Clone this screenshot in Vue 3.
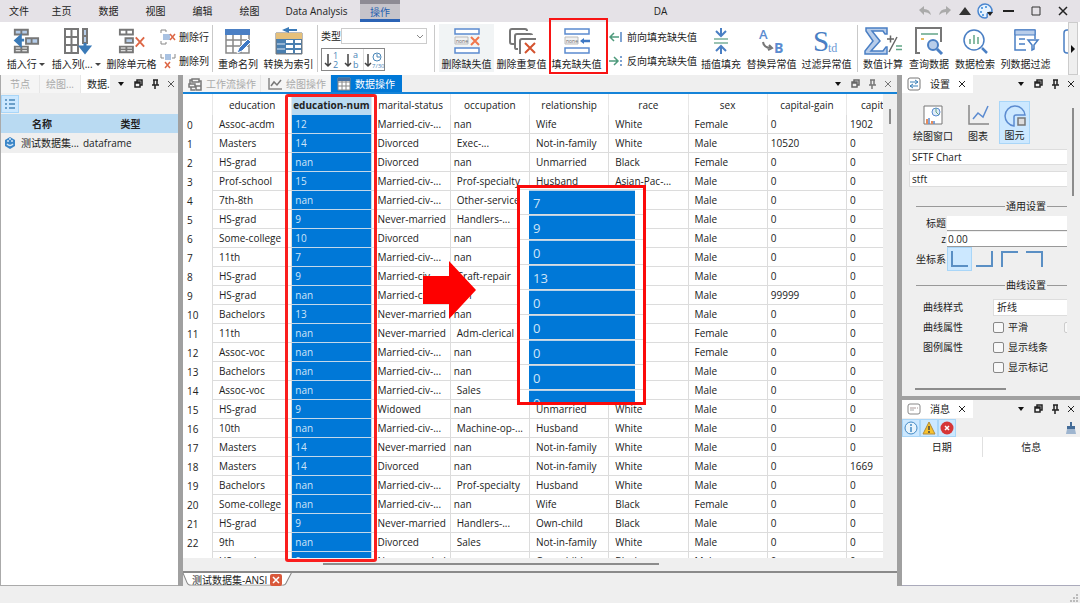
<script setup>
import { ref } from 'vue'

const menus = ['文件', '主页', '数据', '视图', '编辑', '绘图', 'Data Analysis', '操作']

const icons = {
  insertRow: '<g fill="#fff" stroke="#777" stroke-width="2"><path fill="#b5cdea" d="M2 2h14v5H2zM9 2v5M14 11h13v6H14zM20 11v6"/><path d="M2 26v-6h14v6zM2 23h14M9 20v6"/></g><path d="M12 13H5M8 9l-5 4.500 5 4.500z" stroke="#3a7ab8" stroke-width="3" fill="#3a7ab8"/>',
  insertCol: '<path fill="#fff" stroke="#777" stroke-width="2" d="M2 2h13v24H2zM8.500 2v24M2 10h13M2 18h13"/><path fill="#b5cdea" stroke="#777" stroke-width="2" d="M20 2h4v14h-4zM20 9h4"/><path d="M22 16v6M18 20l4 5 4-5z" stroke="#3a7ab8" stroke-width="3" fill="#3a7ab8"/>',
  deleteCell: '<g fill="#fff" stroke="#777" stroke-width="2"><path d="M2 2h14v5H2zM9 2v5M2 20h14v6H2zM9 20v6M2 23h14"/><path fill="#b5cdea" d="M8 11h8v5H8z"/></g><path d="M19 10l9 10M28 10l-9 10" stroke="#dd6645" stroke-width="2"/>',
  deleteRow: '<path d="M1 4V1h5v2M1 12v3h5v-2" fill="none" stroke="#888"/><path d="M3 5h7v6H3z" fill="#a9c2e2"/><path d="M10 5l5 6M15 5l-5 6" stroke="#dd6645" stroke-width="1.500"/>',
  deleteCol: '<path d="M1 1v4h3M15 1v4h-3" fill="none" stroke="#888"/><path d="M5 1h6v6H5z" fill="#a9c2e2"/><path d="M5 9l5 6M10 9l-5 6" stroke="#dd6645" stroke-width="1.500"/>',
  rename: '<path fill="#fff" stroke="#888" stroke-width="1.500" d="M2 3h23v23H2zM9 6v20M17 6v20M2 13h23M2 19h23"/><path fill="#4a7fc4" d="M1 2h25v6H1z"/><path d="M13 26l2-5 9-9 3 3-9 9z" fill="#3e78c4" stroke="#fff"/>',
  toIndex: '<path d="M9 3h13" stroke="#3a7ab8" stroke-width="2"/><path d="M14 0L7 3l7 3z" fill="#3a7ab8"/><path fill="#4a7fb0" stroke="#777" d="M1 6h26v21H1z"/><path fill="#e5c07b" d="M1 6h26v6H1z"/><path fill="#fff" d="M11 13h7v3h-7zM20 13h6v3h-6zM11 18h7v3h-7zM20 18h6v3h-6zM11 23h7v3h-7zM20 23h6v3h-6z"/><path d="M2 17h8M2 22h8" stroke="#dde8f4"/>',
  dropNone: '<path fill="#fff" stroke="#5b8bd0" stroke-width="1.500" d="M2 2h24v5H2zM2 21h24v5H2z"/><path fill="#f1f1f1" stroke="#bbb" d="M2 10h13v7H2z"/><text x="3" y="16" font-size="5" fill="#666" font-family="Open Sans">none</text><path d="M18 10l8 8M26 10l-8 8" stroke="#f0764c" stroke-width="2"/>',
  dropDup: '<path fill="none" stroke="#777" stroke-width="2" d="M6 17H4q-2 0-2-2V4q0-2 2-2h13q2 0 2 2M10 22H8q-1 0-1-2V9q0-2 2-2h13q2 0 2 1M12 27V14q0-2 2-2h14"/><path d="M17 16l10 10M27 16L17 26" stroke="#d4532f" stroke-width="2"/>',
  fillNone: '<path fill="#fff" stroke="#5b8bd0" stroke-width="1.500" d="M2 2h24v5H2zM2 21h24v5H2z"/><path fill="#f1f1f1" stroke="#bbb" d="M2 10h13v7H2z"/><text x="3" y="16" font-size="5" fill="#666" font-family="Open Sans">none</text><path d="M20 14h7" stroke="#3e78c4" stroke-width="2.500"/><path d="M21 11l-4 3 4 3z" fill="#3e78c4"/>',
  ffill: '<path d="M2 8h9M6 4L2 8l4 4" fill="none" stroke="#4e9a7c" stroke-width="1.500"/><path d="M13 3v10" stroke="#5484c4" stroke-width="1.500"/>',
  bfill: '<path d="M1 8h9M6 4l4 4-4 4" fill="none" stroke="#4e9a7c" stroke-width="1.500"/><path d="M13 3v10" stroke="#5484c4" stroke-width="1.500" stroke-dasharray="2 2"/>',
  interp: '<path d="M7 12h14M7 16h14" stroke="#7ab09b" stroke-width="1.500"/><path d="M14 1v8M9 4l5 5 5-5M14 27v-8M9 24l5-5 5 5" fill="none" stroke="#4a7fc4" stroke-width="2"/>',
  replace: '<text x="1" y="12" font-size="13" font-weight="600" fill="#5b8bd0" font-family="Open Sans">A</text><text x="16" y="26" font-size="14" font-weight="700" fill="#5b8bd0" font-family="Open Sans">B</text><path d="M5 15q1 6 8 6M11 18l3 3-4 2" fill="none" stroke="#777" stroke-width="2"/>',
  std: '<text x="0" y="24" font-size="29" fill="#4a7fc4" font-family="Liberation Serif">S</text><text x="15" y="25" font-size="12" fill="#6b98d4" font-family="Liberation Serif">td</text>',
  calc: '<path d="M-3 1h21v6h-2l-2-3H3l8 10-9 10h12l3-4h1v7H-4v-3l8-10-7-10z" fill="#b8cdea" stroke="#4a7fc4" stroke-width="1.500"/><path d="M18 12h7M21.500 8.500v7M20 25l8-15" stroke="#666" stroke-width="1.500"/><path d="M27 19h6M27 22.500h6" stroke="#62a587" stroke-width="1.500"/>',
  query: '<path d="M5 26H1V1h25v14" fill="none" stroke="#777" stroke-width="2"/><path d="M6 7h17" stroke="#62a587" stroke-width="1.500"/><path d="M6 12h3" stroke="#e4b95b" stroke-width="2"/><circle cx="18" cy="18" r="5" fill="#b8cdea" stroke="#4a7fc4" stroke-width="2"/><path d="M22 22l5 5" stroke="#4a7fc4" stroke-width="3"/>',
  search: '<circle cx="13" cy="13" r="10" fill="none" stroke="#4a7fc4" stroke-width="1.500"/><path d="M21 21l5 5" stroke="#4a7fc4" stroke-width="2.500"/><path d="M9 12v5M13 8v9M17 10v7" stroke="#62a587" stroke-width="1.500"/>',
  filter: '<path d="M14 23H3V3h20v9" fill="none" stroke="#4a7fc4" stroke-width="1.500"/><path d="M3 3h20v5H3z" fill="#b8cdea" stroke="#4a7fc4"/><path d="M7 12h6M7 17h6" stroke="#4a7fc4" stroke-width="1.500"/><path d="M16 13h10l-4 5v4l-2 1v-5z" fill="#fff" stroke="#4a7fc4" stroke-width="1.500"/>'
}

const missing = [
  { t: '删除缺失值', i: 'dropNone', c: 'hover' },
  { t: '删除重复值', i: 'dropDup' },
  { t: '填充缺失值', i: 'fillNone', c: 'marked' }
]
const outliers = [
  { t: '插值填充', i: 'interp', c: 'four' },
  { t: '替换异常值', i: 'replace' },
  { t: '过滤异常值', i: 'std' }
]
const tools = [
  { t: '数值计算', i: 'calc', c: 'four' },
  { t: '查询数据', i: 'query', c: 'four' },
  { t: '数据检索', i: 'search', c: 'four' },
  { t: '列数据过滤', i: 'filter' }
]

const columns = ['education', 'education-num', 'marital-status', 'occupation', 'relationship', 'race', 'sex', 'capital-gain']
const M = 'Married-civ-...'
const N = 'Never-married'
const D = 'Divorced'
const rows = [
  ['Assoc-acdm', '12', M, 'nan', 'Wife', 'White', 'Female', '0', '1902'],
  ['Masters', '14', D, 'Exec-...', 'Not-in-family', 'White', 'Male', '10520', '0'],
  ['HS-grad', 'nan', D, 'nan', 'Unmarried', 'Black', 'Female', '0', '0'],
  ['Prof-school', '15', M, 'Prof-specialty', 'Husband', 'Asian-Pac-...', 'Male', '0', '0'],
  ['7th-8th', 'nan', M, 'Other-service', '', '', 'Male', '0', '0'],
  ['HS-grad', '9', N, 'Handlers-...', '', '', 'Male', '0', '0'],
  ['Some-college', '10', D, 'nan', '', '', 'Male', '0', '0'],
  ['11th', '7', M, 'nan', '', '', 'Male', '0', '0'],
  ['HS-grad', '9', M, 'Craft-repair', '', '', 'Male', '0', '0'],
  ['HS-grad', 'nan', M, 'nan', '', '', 'Male', '99999', '0'],
  ['Bachelors', '13', N, 'nan', '', '', 'Male', '0', '0'],
  ['11th', 'nan', N, 'Adm-clerical', '', '', 'Female', '0', '0'],
  ['Assoc-voc', 'nan', M, 'nan', '', '', 'Female', '0', '0'],
  ['Bachelors', 'nan', M, 'nan', '', '', 'Male', '0', '0'],
  ['Assoc-voc', 'nan', M, 'Sales', '', '', 'Male', '0', '0'],
  ['HS-grad', '9', 'Widowed', 'nan', 'Unmarried', 'White', 'Male', '0', '0'],
  ['10th', 'nan', M, 'Machine-op-...', 'Husband', 'White', 'Male', '0', '0'],
  ['Masters', '14', N, 'nan', 'Not-in-family', 'White', 'Male', '0', '0'],
  ['Masters', '14', D, 'nan', 'Not-in-family', 'White', 'Male', '0', '1669'],
  ['Bachelors', 'nan', M, 'Prof-specialty', 'Husband', 'White', 'Male', '0', '0'],
  ['Some-college', 'nan', M, 'nan', 'Wife', 'Black', 'Female', '0', '0'],
  ['HS-grad', '9', N, 'Handlers-...', 'Own-child', 'Black', 'Male', '0', '0'],
  ['9th', 'nan', D, 'Sales', 'Not-in-family', 'White', 'Male', '0', '0'],
  ['HS-grad', '9', N, 'nan', 'Own-child', 'Black', 'Male', '0', '0']
]
const filled = ['7', '9', '0', '13', '0', '0', '0', '0', '0']

const isLead = (v, c) => c !== 1 && c < 7 && v !== 'nan'

const chartTitle = ref('')
const zValue = ref('0.00')
const axes = ['M2 1v15h16', 'M17 1v15H1', 'M2 17V2h16', 'M17 17V2H1']
</script>

<template>
  <div class="app">
    <header class="titlebar">
      <nav class="menus">
        <button v-for="m in menus" :key="m" class="menu" :class="{ active: m === '操作', file: m === '文件', wide: m.length > 4 }">{{ m }}</button>
      </nav>
      <span class="caption">DA</span>
      <div class="window-tools">
        <button aria-label="撤销"><svg width="14" height="12" viewBox="0 0 14 12"><path d="M1 5l5-4v3q6 0 7 6-3-3-7-3v3z" fill="#aaa" /></svg></button>
        <button aria-label="重做"><svg width="14" height="12" viewBox="0 0 14 12"><path d="M13 5L8 1v3q-6 0-7 6 3-3 7-3v3z" fill="#aaa" /></svg></button>
        <button aria-label="折叠功能区"><svg width="12" height="10" viewBox="0 0 12 10"><path d="M0 9l6-8 6 8z" fill="#333" /></svg></button>
        <button aria-label="主题"><svg width="18" height="18" viewBox="0 0 18 18"><path d="M9 2a7 7 0 1 0 0 14q3 0 2-3 0-3 5-3a7 7 0 0 0-7-8z" fill="#e7f2fd" stroke="#4a86cf" stroke-width="1.500" /><g fill="#3688d8"><circle cx="6" cy="6" r="1" /><circle cx="10" cy="5" r="1" /><circle cx="5" cy="10" r="1" /><circle cx="7" cy="13" r="1" /></g><path d="M11 10h6l-3 4z" fill="#222" /></svg></button>
        <button class="win" aria-label="最小化"><svg width="12" height="12" viewBox="0 0 12 12"><path d="M0 6h11" stroke="#222" stroke-width="2" /></svg></button>
        <button class="win" aria-label="最大化"><svg width="12" height="12" viewBox="0 0 12 12"><path d="M2 2h8v8H2z" fill="none" stroke="#333" /></svg></button>
        <button class="win" aria-label="关闭"><svg width="12" height="12" viewBox="0 0 12 12"><path d="M2 2l8 8M10 2l-8 8" stroke="#222" stroke-width="1.500" /></svg></button>
      </div>
    </header>

    <section class="ribbon">
      <div class="group first">
        <button class="tool four"><svg class="big" viewBox="-1 0 30 28" v-html="icons.insertRow" /><span>插入行 <i class="drop" /></span></button>
        <button class="tool"><svg class="big" viewBox="0 0 28 28" v-html="icons.insertCol" /><span>插入列(... <i class="drop" /></span></button>
        <button class="tool"><svg class="big" viewBox="0 0 30 28" v-html="icons.deleteCell" /><span>删除单元格</span></button>
        <div class="stack">
          <button class="small"><svg width="16" height="16" v-html="icons.deleteRow" />删除行</button>
          <button class="small"><svg width="16" height="16" v-html="icons.deleteCol" />删除列</button>
        </div>
      </div>
      <div class="group">
        <button class="tool four"><svg class="big" viewBox="0 0 28 28" v-html="icons.rename" /><span>重命名列</span></button>
        <button class="tool"><svg class="big" viewBox="0 0 28 28" v-html="icons.toIndex" /><span>转换为索引</span></button>
      </div>
      <div class="group typing">
        <div class="type-row">
          <label for="dtype">类型</label>
          <div class="select-box">
            <select id="dtype"><option></option></select>
            <svg width="8" height="6" viewBox="0 0 8 6"><path d="M1 1l3 3 3-3" fill="none" stroke="#888" /></svg>
          </div>
        </div>
        <div class="sorts">
          <button aria-label="转换为数值"><svg width="20" height="20" viewBox="0 0 20 20"><path d="M6 4v12M3 13l3 3 3-3" fill="none" stroke="#444" stroke-width="1.500" /><g font-size="9" fill="#4a86b8" font-family="Open Sans"><text x="11" y="9">1</text><text x="11" y="18">2</text></g></svg></button>
          <button aria-label="转换为文本"><svg width="20" height="20" viewBox="0 0 20 20"><path d="M6 4v12M3 13l3 3 3-3" fill="none" stroke="#444" stroke-width="1.500" /><g font-size="9" fill="#4a86b8" font-family="Open Sans"><text x="11" y="8">a</text><text x="11" y="18">b</text></g></svg></button>
          <button aria-label="转换为时间"><svg width="20" height="20" viewBox="0 0 20 20"><path d="M4 4v12M1 13l3 3 3-3" fill="none" stroke="#444" stroke-width="1.500" /><circle cx="13" cy="7" r="4" fill="#fff" stroke="#4a86b8" /><path d="M13 4v3h3" fill="none" stroke="#4a86b8" /><text x="8" y="18" font-size="6" fill="#4a86b8" font-family="Open Sans">7/30</text></svg></button>
        </div>
      </div>
      <div class="group fixes">
        <button v-for="b in missing" :key="b.t" class="tool" :class="b.c"><svg class="big" viewBox="0 0 28 28" v-html="icons[b.i]" /><span>{{ b.t }}</span></button>
        <div class="stack fills">
          <button class="small"><svg width="16" height="16" v-html="icons.ffill" />前向填充缺失值</button>
          <button class="small"><svg width="16" height="16" v-html="icons.bfill" />反向填充缺失值</button>
        </div>
        <button v-for="b in outliers" :key="b.t" class="tool" :class="b.c"><svg class="big" viewBox="0 0 28 28" v-html="icons[b.i]" /><span>{{ b.t }}</span></button>
      </div>
      <div class="group last">
        <button v-for="b in tools" :key="b.t" class="tool" :class="b.c"><svg class="big" viewBox="0 0 28 28" v-html="icons[b.i]" /><span>{{ b.t }}</span></button>
        <button class="tool cut"><svg class="big" viewBox="0 0 28 28"><rect x="1" y="3" width="24" height="23" rx="3" fill="#fff" stroke="#4a7fc4" stroke-width="1.500" /></svg><span>换</span></button>
      </div>
      <button class="ribbon-next" aria-label="向右滚动"><svg width="4" height="8" viewBox="0 0 4 8"><path d="M0 0l4 4-4 4z" fill="#111" /></svg></button>
    </section>

    <main class="docks">
      <aside class="dock left">
        <div class="tabs">
          <button class="tab dim">节点</button>
          <button class="tab dim second">绘图...</button>
          <button class="tab on">数据.</button>
          <span class="dock-tools"><svg viewBox="0 0 68 12"><path d="M8 4h6l-3 4z" fill="#111" /><path d="M25 4h5v5h-5zM27 4V2h5v5h-2M25 5h5M27 2h5" fill="none" stroke="#222" stroke-width="1.500" /><path d="M43 2h5M44 2v5M47 2v5M42 7h7M45 7v4" stroke="#222" stroke-width="1.500" fill="none" /><path d="M58 3l6 6M64 3l-6 6" stroke="#555" /></svg></span>
        </div>
        <div class="left-bar">
          <button class="toggle" aria-label="列表视图"><svg width="12" height="12" viewBox="0 0 12 12"><path d="M1 2h2M1 6h2M1 10h2M5 2h6M5 6h6M5 10h6" stroke="#4a86b8" stroke-width="1.500" /></svg></button>
        </div>
        <table class="tree">
          <thead><tr><th>名称</th><th>类型</th></tr></thead>
          <tbody><tr><td><svg width="12" height="12" viewBox="0 0 12 12"><path d="M6 0l5 3v6l-5 3-5-3V3z" fill="#3d87c8" /><path d="M3 4h2M7 4h2M3 7q3 3 6 0M5 2h2" stroke="#d3e7f8" stroke-width="1.500" fill="none" /></svg>测试数据集...</td><td>dataframe</td></tr></tbody>
        </table>
      </aside>

      <section class="center">
        <div class="tabs ops">
          <button class="tab dim"><svg width="14" height="14" viewBox="0 0 14 14"><path d="M4 2h7v3H4zM1 7h6v3H1zM8 9h5v4H8zM2 7V3h2M11 4h2v5M3 10v3h4" fill="none" stroke="#777" stroke-width="1.500" /></svg>工作流操作</button>
          <button class="tab dim mid"><svg width="14" height="14" viewBox="0 0 14 14"><path d="M1 1v11h13" fill="none" stroke="#888" stroke-width="1.500" /><path d="M3 9l3-4 3 3 4-5" fill="none" stroke="#777" stroke-width="1.500" /></svg>绘图操作</button>
          <button class="tab now"><svg width="14" height="14" viewBox="0 0 14 14"><path fill="#fff" stroke="#888" d="M1 1h12v12H1zM1 5h12M1 9h12M5 4v9M9 4v9" /><path fill="#4a6f9c" d="M1 1h12v3H1z" /></svg>数据操作</button>
          <span class="dock-tools faint"><svg viewBox="0 0 68 12"><path d="M8 4h6l-3 4z" fill="#111" /><path d="M25 4h5v5h-5zM27 4V2h5v5h-2M25 5h5M27 2h5" fill="none" stroke="#666" stroke-width="1.500" /><path d="M43 2h5M44 2v5M47 2v5M42 7h7M45 7v4" stroke="#777" stroke-width="1.500" fill="none" /><path d="M58 3l6 6M64 3l-6 6" stroke="#777" /></svg></span>
        </div>
        <div class="sheet">
          <div class="grid-view">
            <table class="grid">
              <colgroup><col class="c-index" /><col v-for="c in columns" :key="c" /><col class="c-last" /></colgroup>
              <thead><tr><th></th><th v-for="(c, i) in columns" :key="c" :class="{ sel: i === 1 }">{{ c }}</th><th class="clip">capit</th></tr></thead>
              <tbody>
                <tr v-for="(r, n) in rows" :key="n">
                  <th scope="row">{{ n < 23 ? n : '' }}</th>
                  <td v-for="(v, c) in r" :key="c" :class="{ sel: c === 1, lead: isLead(v, c) }">{{ v }}</td>
                </tr>
              </tbody>
            </table>
          </div>
          <div class="vbar"><i /></div>
          <div class="hbar"><i /></div>
          <div class="mark-column" />
          <svg class="arrow" width="53" height="58" viewBox="0 0 53 58"><path d="M0 15h26V0l27 29-27 29V43H0z" fill="#fe0000" /></svg>
          <div class="inset">
            <div v-for="(v, i) in filled" :key="i" class="inset-row"><span>{{ v }}</span></div>
          </div>
        </div>
        <div class="sheet-tabs">
          <button class="sheet-tab">
            <svg class="sheet-edge" viewBox="0 0 108 15" preserveAspectRatio="none"><path d="M0 0l4 11q1 3 4 3h91q3 0 4-3l5-11" fill="#fff" stroke="#888" /></svg>
            <span>测试数据集-ANSI</span>
            <svg width="12" height="12" viewBox="0 0 12 12"><rect width="12" height="12" rx="2" fill="#d9583a" /><path d="M3 3l6 6M9 3L3 9" stroke="#fff" stroke-width="1.500" /></svg>
          </button>
        </div>
      </section>

      <aside class="right">
        <section class="dock settings">
          <div class="tabs">
            <button class="tab on named"><svg width="14" height="14" viewBox="0 0 14 14"><rect x="1" y="1" width="12" height="12" rx="2" fill="#fff" stroke="#777" /><path d="M3 5h8M3 9h8M8 3l3 2-3 2M6 7L3 9l3 2" stroke="#3a80b8" fill="none" /></svg>设置<svg class="x" width="8" height="8" viewBox="0 0 8 8"><path d="M1 1l6 6M7 1L1 7" stroke="#222" /></svg></button>
            <span class="dock-tools"><svg viewBox="0 0 68 12"><path d="M8 4h6l-3 4z" fill="#111" /><path d="M25 4h5v5h-5zM27 4V2h5v5h-2M25 5h5M27 2h5" fill="none" stroke="#222" stroke-width="1.500" /><path d="M43 2h5M44 2v5M47 2v5M42 7h7M45 7v4" stroke="#222" stroke-width="1.500" fill="none" /><path d="M58 3l6 6M64 3l-6 6" stroke="#222" /></svg></span>
          </div>
          <div class="settings-body">
            <div class="form">
              <div class="kinds">
                <button class="kind"><svg width="22" height="22" viewBox="0 0 22 22"><path d="M2 2h18v18H2z" fill="#fff" stroke="#777" /><circle cx="14" cy="8" r="4" fill="#e1ecf8" stroke="#5b8bd0" /><path d="M14 4v4l3 3" stroke="#62a587" fill="none" /><path d="M5 20v-5M10 20v-3" stroke="#e58c5c" stroke-width="2" /><path d="M7 20v-6M12 20v-3" stroke="#5b8bd0" stroke-width="1.500" /></svg>绘图窗口</button>
                <button class="kind chart"><svg width="22" height="22" viewBox="0 0 22 22"><path d="M2 1v19h20" fill="none" stroke="#888" stroke-width="1.500" /><path d="M6 15l5-6 5 4 5-11" fill="none" stroke="#5b8bd0" stroke-width="1.500" /></svg>图表</button>
                <button class="kind picked"><svg width="22" height="22" viewBox="0 0 22 22"><path d="M21 10A10 10 0 1 0 10 21v-9q0-2 2-2z" fill="none" stroke="#5b8bd0" stroke-width="1.500" /><path d="M14 13h7v7h-7z" fill="#ddd" stroke="#777" stroke-width="1.500" /></svg>图元</button>
              </div>
              <input class="field" aria-label="图表类型" value="SFTF Chart" />
              <input class="field" aria-label="图元名称" value="stft" />
              <div class="divider"><span>通用设置</span></div>
              <div class="line"><label for="ctitle">标题</label><input id="ctitle" v-model="chartTitle" /></div>
              <div class="line"><label for="cz">z</label><input id="cz" v-model="zValue" /></div>
              <div class="line axes"><span class="lab">坐标系</span>
                <button v-for="(a, i) in axes" :key="a" :class="{ picked: i === 0 }" :aria-label="'坐标系 ' + (i + 1)"><svg width="19" height="18" viewBox="0 0 19 18"><path :d="a" fill="none" stroke="#5a8fc4" stroke-width="2" /></svg></button>
              </div>
              <div class="divider second"><span>曲线设置</span></div>
              <div class="prop"><label for="cstyle">曲线样式</label><select id="cstyle"><option>折线</option></select></div>
              <div class="prop"><span>曲线属性</span><label><input type="checkbox" />平滑</label><input class="edge" type="checkbox" aria-label="填充" /></div>
              <div class="prop"><span>图例属性</span><label><input type="checkbox" />显示线条</label></div>
              <div class="prop"><span></span><label><input type="checkbox" />显示标记</label></div>
            </div>
            <div class="vbar2"><i /></div>
            <div class="hbar2"><i /></div>
          </div>
        </section>
        <section class="dock messages">
          <div class="tabs">
            <button class="tab on named"><svg width="14" height="14" viewBox="0 0 14 14"><rect x="1" y="2" width="12" height="10" rx="2" fill="#fff" stroke="#888" /><path d="M3 6h6M10 6h1" stroke="#a99" /><path d="M3 8h4" stroke="#aaa" /></svg>消息<svg class="x" width="8" height="8" viewBox="0 0 8 8"><path d="M1 1l6 6M7 1L1 7" stroke="#222" /></svg></button>
            <span class="dock-tools"><svg viewBox="0 0 68 12"><path d="M8 4h6l-3 4z" fill="#111" /><path d="M25 4h5v5h-5zM27 4V2h5v5h-2M25 5h5M27 2h5" fill="none" stroke="#222" stroke-width="1.500" /><path d="M43 2h5M44 2v5M47 2v5M42 7h7M45 7v4" stroke="#222" stroke-width="1.500" fill="none" /><path d="M58 3l6 6M64 3l-6 6" stroke="#222" /></svg></span>
          </div>
          <div class="msg-bar">
            <button class="toggle" aria-label="信息"><svg width="14" height="14" viewBox="0 0 14 14"><circle cx="7" cy="7" r="6" fill="#e8f4fc" stroke="#4389c4" /><path d="M7 6v5M7 3v2" stroke="#4389c4" stroke-width="1.500" /></svg></button>
            <button class="toggle" aria-label="警告"><svg width="14" height="14" viewBox="0 0 14 14"><path d="M7 1l6 12H1z" fill="#f8c22c" stroke="#b08a3c" /><path d="M7 5v4M7 10v2" stroke="#444" stroke-width="1.500" /></svg></button>
            <button class="toggle" aria-label="错误"><svg width="14" height="14" viewBox="0 0 14 14"><circle cx="7" cy="7" r="6.500" fill="#d63638" /><path d="M5 5l4 4M9 5L5 9" stroke="#fff" stroke-width="1.500" /></svg></button>
            <button class="brush" aria-label="清空"><svg width="12" height="14" viewBox="0 0 12 14"><path d="M6 1v4" stroke="#446c98" stroke-width="2" /><path d="M2 5h8v3H2z" fill="#446c98" /><path d="M2 8h8l1 5H1z" fill="#9eb5cf" /></svg></button>
          </div>
          <table class="log"><thead><tr><th>日期</th><th>信息</th></tr></thead></table>
        </section>
      </aside>
    </main>
    <footer class="status"><svg width="9" height="9" viewBox="0 0 9 9"><path d="M6 0h2v2H6zM3 3h2v2H3zM6 3h2v2H6zM0 6h2v2H0zM3 6h2v2H3zM6 6h2v2H6z" fill="#bbb" /></svg></footer>
  </div>
</template>

<style>
html, body { background: #efefef; }
</style>

<style scoped>
.app, .app * { box-sizing: border-box; }
.app { display: flex; flex-direction: column; height: 100vh; overflow: hidden; font: 10px/14px "Open Sans", "Noto Sans CJK SC", sans-serif; color: #222; background: #efefef; }
button { border: 0; padding: 0; margin: 0; background: none; font: inherit; color: inherit; white-space: nowrap; }
input, select { font: inherit; color: inherit; margin: 0; border-radius: 0; min-width: 0; }
svg { display: block; flex: none; overflow: visible; }
table { border-collapse: collapse; border-spacing: 0; }

.titlebar { display: flex; height: 22px; background: #e5e2e7; flex: none; position: relative; }
.menus { display: flex; }
.menu { width: 47px; height: 22px; }
.menu.file { width: 38px; }
.menu.wide { width: 87px; }
.menu.active { width: 40px; background: #c6c4ca; border-top: 4px solid #8d8b94; border-bottom: 3px solid #2b63b5; color: #2560b0; line-height: 14px; }
.caption { flex: 1; text-align: center; line-height: 22px; padding-left: 6px; }
.window-tools { display: flex; align-items: center; margin-right: 4px; }
.window-tools button { width: 20px; height: 22px; display: grid; place-items: center; }
.window-tools .win { width: 27px; }

.ribbon { display: flex; height: 53px; background: #fff; flex: none; position: relative; }
.group { display: flex; flex: none; padding: 2px 2px; position: relative; }
.group::after { content: ""; position: absolute; right: 0; top: 3px; bottom: 3px; width: 1px; background: #c9c9c9; }
.group.first { padding: 2px 3px; }
.group.fixes { padding: 2px 4px; }
.group.last { flex: 1; overflow: hidden; }
.group.last::after { display: none; }
.tool { width: 55px; height: 48px; display: flex; flex-direction: column; align-items: center; justify-content: space-between; padding: 3px 0 1px; position: relative; flex: none; }
.tool.four { width: 46px; }
.tool.hover { background: #f1f4f5; }
.tool.cut { margin-left: 10px; width: 28px; }
.tool.marked::after { content: ""; position: absolute; left: 0; right: -4px; top: -6px; bottom: -2px; border: 2px solid #f81414; }
.big { width: 28px; height: 28px; }
.drop { display: inline-block; border: 3px solid transparent; border-top-color: #444; border-bottom: 0; vertical-align: 2px; }
.stack { display: flex; flex-direction: column; justify-content: space-between; padding: 4px 1px; }
.small { display: flex; align-items: center; gap: 3px; height: 17px; }
.fills { padding: 4px 1px 4px 4px; }
.typing { flex-direction: column; gap: 4px; width: 117px; padding: 6px 8px 4px 3px; }
.type-row { display: flex; align-items: center; height: 16px; }
.select-box { position: relative; flex: 1; }
.select-box select { appearance: none; width: 100%; height: 16px; display: block; border: 1px solid #ccc; background: #fff; }
.select-box svg { position: absolute; right: 3px; top: 6px; }
.sorts { display: flex; width: 64px; height: 23px; border: 1px solid #888; }
.sorts button { flex: 1; display: grid; place-items: center; }
.sorts button:last-child { border-left: 1px solid #ddd; }
.ribbon-next { width: 10px; margin-right: 2px; background: #efefef; border: 1px solid #ccc; display: grid; place-items: center; }

.docks { display: flex; flex: 1; min-height: 0; background: #efefef; }
.dock { background: #efefef; }
.tabs { display: flex; height: 18px; flex: none; background: #efefef; }
.tab { padding: 0 9px; display: flex; align-items: center; }
.tab.dim { color: #aaa; background: #f5f5f5; border-right: 1px solid #e6e6e6; }
.tab.second { padding: 0 6px; }
.tab.on { background: #fff; }
.dock-tools { margin: 0 2px 0 auto; width: 68px; display: flex; align-items: center; flex: none; }
.dock-tools svg { width: 68px; height: 12px; }

.left { width: 178px; display: flex; flex-direction: column; background: #fff; border-left: 1px solid #aaa; border-bottom: 1px solid #aaa; flex: none; }
.left .tab.on { padding: 0 0 0 6px; }
.left-bar { height: 21px; background: #efefef; display: flex; align-items: center; }
.toggle { width: 18px; height: 18px; background: #cce8ff; border: 1px solid #a9d6f8; display: grid; place-items: center; }
.tree { width: 100%; table-layout: fixed; }
.tree th { height: 19px; padding: 0; background: #b9daf2; font-weight: 700; color: #222; }
.tree td { height: 20px; padding: 0; background: #efefef; white-space: nowrap; }
.tree td svg { display: inline-block; margin: 0 5px 0 3px; vertical-align: -2px; }
.tree th:first-child { width: 82px; }

.center { flex: 1; min-width: 0; display: flex; flex-direction: column; border-left: 5px solid #a0a0a0; }
.ops { border-bottom: 2px solid #1583d8; height: 19px; }
.ops .tab { gap: 4px; padding: 0 4px 0 5px; }
.ops .mid { padding: 0 4px 0 7px; }
.ops .tab.now { background: #0078d7; color: #fff; padding: 0 7px 0 6px; }
.sheet { flex: 1; min-height: 0; display: grid; grid-template: minmax(0, 1fr) 13px / minmax(0, 1fr) 14px; position: relative; border-bottom: 2px solid #8a8a8a; }
.grid-view { overflow: hidden; background: #fff; }
.grid { width: 100%; table-layout: fixed; border-collapse: separate; }
.c-index { width: 30px; }
.c-last { width: 36px; }
.grid th, .grid td { height: 19px; padding: 0 0 0 3px; font-weight: 400; text-align: left; white-space: nowrap; overflow: hidden; }
.grid td { border-right: 1px solid #dcdcdc; border-bottom: 1px solid #dcdcdc; }
.grid td:last-child { border-right: 0; }
.grid tbody th { border-right: 1px solid #dcdcdc; padding-left: 4px; }
.grid thead th { height: 21px; text-align: center; padding: 1px 0 0; border-right: 1px solid #e8e8e8; }
.grid thead th.clip { text-align: left; padding-left: 14px; border: 0; }
.grid thead th.sel { background: #b9daf2; font-weight: 700; }
.grid td.lead { padding-left: 6px; }
.grid td.sel { background: #0078d7; color: #cfe5f8; border-color: #c4d8ea; }
.vbar { padding: 15px 0 0 6px; }
.vbar i { display: block; width: 2px; height: 15px; background: #8c8c8c; }
.hbar { padding: 5px 0 0 140px; }
.hbar i { display: block; width: 60%; height: 2px; background: #8c8c8c; }
.hbar { grid-column: 1; }
.mark-column { position: absolute; left: 102px; top: 0; width: 92px; bottom: 9px; border: 3px solid #fa1e1e; border-radius: 3px; }
.arrow { position: absolute; left: 240px; top: 167px; }
.inset { position: absolute; left: 334px; top: 91px; width: 129px; height: 220px; border: 3px solid #fb0a0a; background: #fff; overflow: hidden; padding-top: 1px; }
.inset-row { height: 25px; border-top: 1px solid #dcdcdc; padding: 0 8px 0 9px; }
.inset-row span { display: block; height: 24px; border-top: 1px solid #b9d2e8; background: #0078d7; color: #cfe5f8; font-size: 13px; line-height: 24px; padding-left: 4px; }
.sheet-tabs { height: 13px; flex: none; }
.sheet-tab { position: relative; display: flex; align-items: center; gap: 3px; height: 13px; padding: 0 9px; }
.sheet-edge { position: absolute; left: 0; top: 0; width: 100%; height: 13px; }
.sheet-tab span, .sheet-tab svg:last-child { position: relative; }

.right { width: 183px; flex: none; display: flex; flex-direction: column; border-left: 5px solid #a0a0a0; background: #a0a0a0; }
.named { width: 71px; padding: 0 0 0 5px; gap: 9px; }
.named .x { margin-left: -1px; }
.settings-body { display: grid; grid-template: auto 14px / minmax(0, 1fr) 13px; }
.form { padding: 8px 0 5px 7px; overflow: hidden; }
.kinds { display: flex; height: 43px; margin-bottom: 5px; }
.kind { display: flex; flex-direction: column; align-items: center; justify-content: space-between; padding: 3px 4px 1px; width: 48px; }
.kind.chart { width: 42px; }
.kind.picked { width: 31px; background: #cce8ff; border: 1px solid #a9d6f8; }
.field { display: block; width: 100%; height: 16px; border: 1px solid #ddd; border-right: 0; background: #fff; padding: 0 2px; margin-bottom: 6px; }
.divider { display: flex; align-items: center; height: 14px; margin: 12px 0 2px 7px; gap: 1px; }
.divider::before { content: ""; flex: 1; height: 1px; background: #999; }
.divider::after { content: ""; width: 20px; height: 1px; background: #999; }
.divider.second { margin: 7px 0 5px 7px; }
.line { display: flex; align-items: center; height: 16px; }
.line label, .line .lab { width: 38px; text-align: right; padding-right: 1px; flex: none; }
.line input { flex: 1; height: 15px; border: 0; border-bottom: 1px solid #999; background: #fff; padding: 0 1px; }
.axes { height: 24px; }
.axes button { width: 25px; height: 24px; display: grid; place-items: center; }
.axes .picked { background: #cce8ff; border: 1px solid #a9d6f8; }
.prop { display: flex; align-items: center; height: 20px; padding-left: 14px; }
.prop > :first-child { width: 70px; flex: none; }
.prop select { appearance: none; flex: 1; height: 17px; border: 1px solid #ddd; border-right: 0; background: #fff; padding: 0 3px; }
.prop label { display: flex; align-items: center; gap: 4px; }
.prop input { appearance: none; width: 11px; height: 11px; border: 1px solid #888; border-radius: 2px; background: #f8f8f8; flex: none; }
.prop .edge { margin-left: auto; margin-right: -8px; border-color: #ccc; }
.vbar2 { padding: 15px 0 0 5px; }
.vbar2 i { display: block; width: 2px; height: 88px; background: #8c8c8c; }
.hbar2 { padding: 6px 0 0 13px; }
.hbar2 i { display: block; width: 60%; height: 2px; background: #8c8c8c; }
.messages { flex: 1; min-height: 0; margin-top: 4px; background: #fff; display: flex; flex-direction: column; border-bottom: 1px solid #aab; }
.msg-bar { display: flex; height: 19px; background: #efefef; align-items: center; }
.brush { margin-left: auto; margin-right: 3px; }
.log { width: 100%; table-layout: fixed; }
.log th { font-weight: 400; height: 20px; padding: 0; }
.log th:first-child { width: 80px; border-right: 1px solid #e0e0e0; }
.status { height: 17px; flex: none; display: flex; align-items: flex-end; justify-content: flex-end; padding: 0 1px; }
</style>
